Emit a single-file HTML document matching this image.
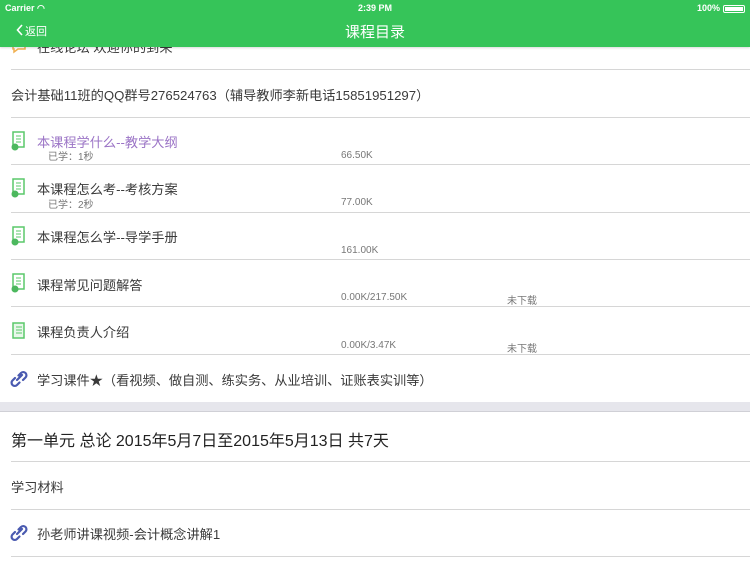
<!DOCTYPE html>
<html><head><meta charset="utf-8"><style>
*{margin:0;padding:0;box-sizing:border-box}
body{width:750px;height:563px;overflow:hidden;background:#fff;font-family:"Liberation Sans","Noto Sans CJK SC",sans-serif;position:relative;color:#333}
.hdr{position:absolute;left:0;top:0;width:750px;height:47px;background:#36c459;color:#fff;z-index:5;box-shadow:0 1px 2px rgba(0,0,0,.15)}
.abs{position:absolute}
.t{position:absolute;font-size:13.2px;color:#3a3a3a;white-space:nowrap}
.s{position:absolute;font-size:10px;color:#777;white-space:nowrap}
.ln{position:absolute;left:11px;right:0;height:1px;background:#d6d6d6}
</style></head><body>
<div class="hdr">
<div class="abs" style="left:5px;top:3px;font-size:9px;font-weight:bold">Carrier <span style="font-size:9px">&#x25E0;</span></div>
<div class="abs" style="left:0;width:750px;top:3px;text-align:center;font-size:9px;font-weight:bold">2:39 PM</div>
<div class="abs" style="right:30px;top:3px;font-size:9px;font-weight:bold">100%</div>
<div class="abs" style="right:5px;top:5px;width:22px;height:8px;border:1px solid #fff;border-radius:2px;padding:1px"><div style="background:#fff;width:100%;height:100%"></div></div>
<svg class="abs" style="left:16px;top:24px" width="8" height="12"><path d="M6 1L1.5 6L6 11" stroke="#fff" stroke-width="1.6" fill="none"/></svg>
<div class="abs" style="left:25px;top:23px;font-size:11px">返回</div>
<div class="abs" style="left:0;width:750px;top:21px;text-align:center;font-size:15px">课程目录</div>
</div>

<svg class="abs" style="left:11px;top:38px" width="16" height="16"><path d="M2 3h12v8H7l-4 3v-3H2z" stroke="#f0b050" stroke-width="1.5" fill="none"/></svg>
<div class="t" style="left:37px;top:37px">在线论坛 欢迎你的到来</div>
<div class="ln" style="top:69px"></div>

<div class="t" style="left:11px;top:85px">会计基础11班的QQ群号276524763（辅导教师李新电话15851951297）</div>
<div class="ln" style="top:117px"></div>

<svg class="abs" style="left:11px;top:131px" width="16" height="20"><rect x="2" y="1" width="11" height="15" fill="none" stroke="#5ac86a" stroke-width="1.5"/><path d="M5 5h5M5 8h5M5 11h5" stroke="#5ac86a"/><circle cx="4" cy="16" r="3.5" fill="#4cb85e"/></svg>
<div class="t" style="left:37px;top:132px;color:#9b74c6">本课程学什么--教学大纲</div>
<div class="s" style="left:48px;top:148px">已学：1秒</div><div class="s" style="left:341px;top:150px">66.50K</div>
<div class="ln" style="top:164px"></div>

<svg class="abs" style="left:11px;top:178px" width="16" height="20"><rect x="2" y="1" width="11" height="15" fill="none" stroke="#5ac86a" stroke-width="1.5"/><path d="M5 5h5M5 8h5M5 11h5" stroke="#5ac86a"/><circle cx="4" cy="16" r="3.5" fill="#4cb85e"/></svg>
<div class="t" style="left:37px;top:179px">本课程怎么考--考核方案</div>
<div class="s" style="left:48px;top:196px">已学：2秒</div><div class="s" style="left:341px;top:197px">77.00K</div>
<div class="ln" style="top:212px"></div>

<svg class="abs" style="left:11px;top:226px" width="16" height="20"><rect x="2" y="1" width="11" height="15" fill="none" stroke="#5ac86a" stroke-width="1.5"/><path d="M5 5h5M5 8h5M5 11h5" stroke="#5ac86a"/><circle cx="4" cy="16" r="3.5" fill="#4cb85e"/></svg>
<div class="t" style="left:37px;top:227px">本课程怎么学--导学手册</div>
<div class="s" style="left:341px;top:245px">161.00K</div>
<div class="ln" style="top:259px"></div>

<svg class="abs" style="left:11px;top:273px" width="16" height="20"><rect x="2" y="1" width="11" height="15" fill="none" stroke="#5ac86a" stroke-width="1.5"/><path d="M5 5h5M5 8h5M5 11h5" stroke="#5ac86a"/><circle cx="4" cy="16" r="3.5" fill="#4cb85e"/></svg>
<div class="t" style="left:37px;top:275px">课程常见问题解答</div>
<div class="s" style="left:341px;top:292px">0.00K/217.50K</div><div class="s" style="left:507px;top:292px">未下载</div>
<div class="ln" style="top:306px"></div>

<svg class="abs" style="left:11px;top:322px" width="16" height="20"><rect x="2" y="1" width="11" height="15" fill="#e8f7ea" stroke="#5ac86a" stroke-width="1.5"/><path d="M5 5h6M5 8h6M5 11h6" stroke="#5ac86a"/></svg>
<div class="t" style="left:37px;top:322px">课程负责人介绍</div>
<div class="s" style="left:341px;top:340px">0.00K/3.47K</div><div class="s" style="left:507px;top:340px">未下载</div>
<div class="ln" style="top:354px"></div>

<svg class="abs" style="left:9px;top:368px" width="20" height="22"><path d="M8 12l5-5M6 10l-2.5 2.5a3 3 0 0 0 4.5 4.5L10.5 14.5M14 12l2.5-2.5a3 3 0 0 0-4.5-4.5L9.5 7.5" stroke="#4a5ab0" stroke-width="2.2" fill="none" stroke-linecap="round"/></svg>
<div class="t" style="left:37px;top:370px">学习课件★（看视频、做自测、练实务、从业培训、证账表实训等）</div>
<div class="abs" style="left:0;top:402px;width:750px;height:10px;background:#e6e6ec;border-bottom:1px solid #d0d0d6"></div>

<div class="t" style="left:11px;top:427px;font-size:16px;color:#222">第一单元 总论 2015年5月7日至2015年5月13日 共7天</div>
<div class="ln" style="top:461px"></div>
<div class="t" style="left:11px;top:477px">学习材料</div>
<div class="ln" style="top:509px"></div>
<svg class="abs" style="left:9px;top:522px" width="20" height="22"><path d="M8 12l5-5M6 10l-2.5 2.5a3 3 0 0 0 4.5 4.5L10.5 14.5M14 12l2.5-2.5a3 3 0 0 0-4.5-4.5L9.5 7.5" stroke="#4a5ab0" stroke-width="2.2" fill="none" stroke-linecap="round"/></svg>
<div class="t" style="left:37px;top:524px">孙老师讲课视频-会计概念讲解1</div>
<div class="ln" style="top:556px"></div>
</body></html>
